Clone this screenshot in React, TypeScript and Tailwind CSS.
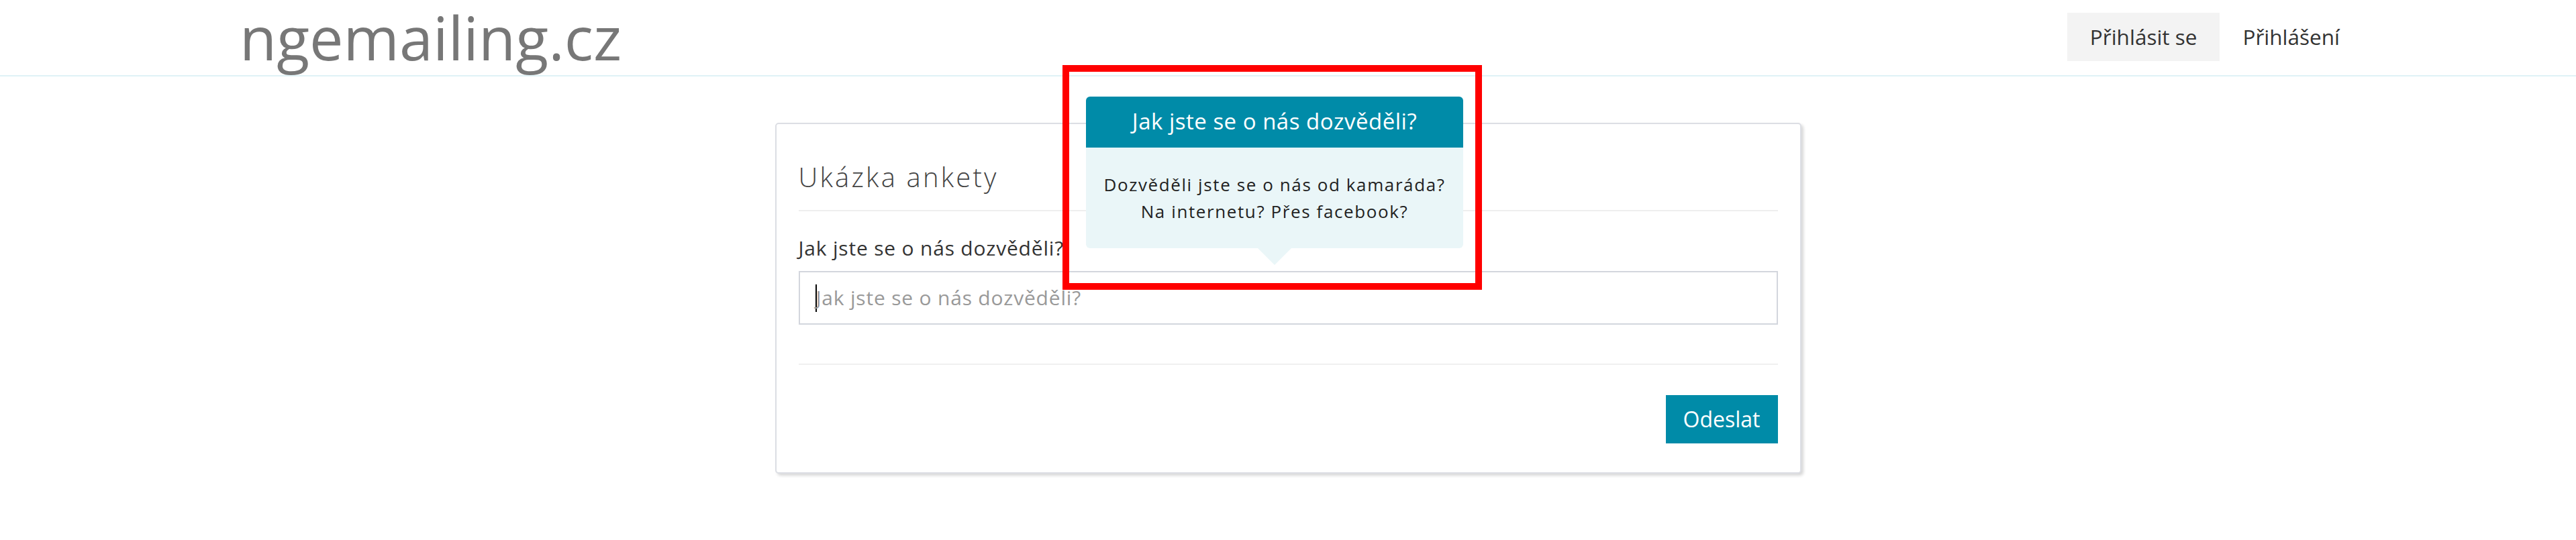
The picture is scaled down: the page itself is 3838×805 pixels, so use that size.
import React from "react";

const font = "font-['Open_Sans','Liberation_Sans',sans-serif]";

function Header() {
  return (
    <header className="flex h-[114px] items-start justify-between border-b-2 border-[#dff2f6] pl-[357px] pr-[318px]">
      <div className="text-[90px] leading-[110px] text-[#777777]">ngemailing.cz</div>
      <nav className="mt-[19px] flex text-[31.5px] leading-[72px] text-[#333333]">
        <a className="h-[72px] bg-[#f3f3f3] px-[34px]" href="#">
          Přihlásit se
        </a>
        <a className="h-[72px] px-[34px]" href="#">
          Přihlášení
        </a>
      </nav>
    </header>
  );
}

function SurveyCard() {
  return (
    <section className="mx-auto mt-[69px] w-[1529px] rounded-[5px] border-2 border-[#dcdee4] bg-white px-[33px] pb-[43px] shadow-[3px_3px_4px_rgba(0,0,0,0.16)]">
      <h2 className="pt-[51px] text-[40px] font-light leading-[56px] tracking-[3.2px] text-[#444444]">Ukázka ankety</h2>
      <div className="mt-[21px] h-[2px] bg-[#eeeeee]" />

      <label className="mt-[34px] block text-[30px] leading-[42px] tracking-[0.8px] text-[#333333]">
        Jak jste se o nás dozvěděli?
      </label>
      <div className="mt-[13px] flex h-[80px] items-center border-2 border-[#d3d6dd] bg-white pl-[23px]">
        <span className="h-[41px] w-[2px] shrink-0 bg-black" />
        <span className="-ml-[1px] text-[30px] leading-[42px] tracking-[0.8px] text-[#999999]">
          Jak jste se o nás dozvěděli?
        </span>
      </div>

      <div className="mt-[58px] h-[2px] bg-[#f0f0f0]" />

      <div className="mt-[45px] flex justify-end">
        <button className="h-[72px] w-[167px] bg-[#008ba8] text-[32px] leading-[72px] text-white" type="button">
          Odeslat
        </button>
      </div>
    </section>
  );
}

function Tooltip() {
  return (
    <div className="absolute left-[1618px] top-[144px] w-[562px]">
      <div className="h-[76px] rounded-t-[6px] bg-[#008ba8] pt-[2px] text-center text-[33px] leading-[70px] tracking-[0.5px] text-white">
        Jak jste se o nás dozvěděli?
      </div>
      <div className="rounded-b-[6px] bg-[#eaf6f8] py-[35px] text-center text-[26px] leading-[40px] tracking-[1.6px] text-[#222222]">
        Dozvěděli jste se o nás od kamaráda?
        <br />
        Na internetu? Přes facebook?
      </div>
      <div className="mx-auto h-0 w-0 border-x-[25px] border-t-[25px] border-x-transparent border-t-[#eaf6f8]" />
    </div>
  );
}

export default function App() {
  return (
    <div className={`relative h-[805px] w-full overflow-hidden bg-white ${font}`}>
      <Header />
      <SurveyCard />
      <Tooltip />
      <div className="absolute left-[1583px] top-[97px] h-[335px] w-[625px] border-[10px] border-[#ff0000]" />
    </div>
  );
}
